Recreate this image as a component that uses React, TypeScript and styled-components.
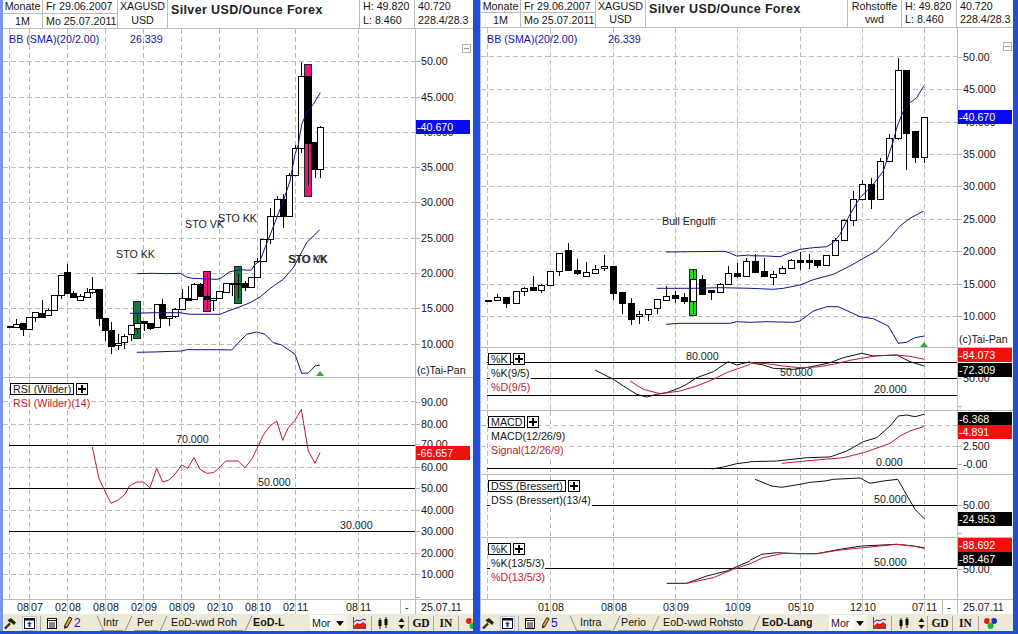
import React from "react";
import styled, { createGlobalStyle } from "styled-components";

const FONT = `"Liberation Sans", Arial, sans-serif`;

const Global = createGlobalStyle`
  html, body { margin: 0; padding: 0; background: #1f50d2; overflow: hidden; }
  #root { width: 1018px; height: 634px; }
`;

const Desktop = styled.div`
  display: flex;
  width: 1018px;
  height: 634px;
  background: #1f50d2;
  overflow: hidden;
  font-family: ${FONT};
  font-size: 10.7px;
  color: #161616;
`;
const ChartWindow = styled.div<{ $w: number; $edge: string; $edgeW: number; $ml: number }>`
  display: flex;
  flex-direction: column;
  width: ${(p) => p.$w}px;
  height: 631px;
  margin-left: ${(p) => p.$ml}px;
  flex: none;
  background: #fff;
  border-left: ${(p) => p.$edgeW}px solid ${(p) => p.$edge};
  box-sizing: border-box;
  overflow: hidden;
`;

/* header */
const Header = styled.div<{ $cols: string; $h: number }>`
  display: grid;
  grid-template-columns: ${(p) => p.$cols};
  height: ${(p) => p.$h}px;
  flex: none;
  border-bottom: 1px solid #bdbdbd;
  background: #fff;
`;
const HeadCell = styled.div`
  display: flex;
  flex-direction: column;
  border-right: 1px solid #bdbdbd;
  overflow: hidden;
  white-space: nowrap;
  &:last-child { border-right: 0; }
`;
const HeadLine = styled.div<{ $row: number; $ruled?: boolean; $center?: boolean }>`
  height: ${(p) => p.$row}px;
  line-height: ${(p) => p.$row}px;
  flex: none;
  padding-left: ${(p) => (p.$center ? 0 : 3)}px;
  text-align: ${(p) => (p.$center ? "center" : "left")};
  border-bottom: ${(p) => (p.$ruled ? "1px solid #bdbdbd" : "0")};
`;
const Title = styled.div<{ $lh: number }>`
  font-weight: 700;
  font-size: 12.5px;
  letter-spacing: 0.36px;
  padding-left: 3px;
  line-height: ${(p) => p.$lh}px;
  color: #222;
`;

/* panels */
const PanelRow = styled.div<{ $h: number }>`
  display: flex;
  height: ${(p) => p.$h}px;
  flex: none;
  border-bottom: 1px solid #bdbdbd;
  box-sizing: border-box;
`;
const PlotArea = styled.div<{ $w: number }>`
  position: relative;
  width: ${(p) => p.$w}px;
  flex: none;
`;
const PlotSvg = styled.svg`
  display: block;
  width: 100%;
  height: 100%;
`;
const AxisColumn = styled.div`
  position: relative;
  flex: 1;
  border-left: 1px solid #bdbdbd;
  overflow: hidden;
`;
const Tick = styled.div.attrs<{ $top: number }>((p) => ({ style: { top: `${p.$top}px` } }))<{ $top: number }>`
  position: absolute;
  left: 0;
  height: 14px;
  line-height: 14px;
  margin-top: -7px;
  padding-left: 5px;
  white-space: nowrap;
  &::before {
    content: "";
    position: absolute;
    left: 0;
    top: 7px;
    width: 4px;
    height: 1px;
    background: #b0b0b0;
  }
`;
const Badge = styled.div.attrs<{ $top: number }>((p) => ({ style: { top: `${p.$top}px` } }))<{ $top: number; $bg: string }>`
  position: absolute;
  left: 0;
  width: 54px;
  height: 14px;
  line-height: 14px;
  padding-left: 1px;
  box-sizing: border-box;
  color: #fff;
  background: ${(p) => p.$bg};
  white-space: nowrap;
`;
const Copyright = styled.div.attrs<{ $top: number; $left: number }>((p) => ({ style: { top: `${p.$top}px`, left: `${p.$left}px` } }))<{ $top: number; $left: number }>`
  position: absolute;
  line-height: 14px;
  white-space: nowrap;
  background: #fff;
`;
const MinBox = styled.div.attrs<{ $top: number; $left: number }>((p) => ({ style: { top: `${p.$top}px`, left: `${p.$left}px` } }))<{ $top: number; $left: number }>`
  position: absolute;
  width: 7px;
  height: 7px;
  border: 1px solid #b4b4b4;
  &::after {
    content: "";
    position: absolute;
    left: 1px;
    right: 1px;
    top: 3px;
    height: 1px;
    background: #9a9a9a;
  }
`;
const MainLegend = styled.div.attrs<{ $left: number; $top: number }>((p) => ({ style: { top: `${p.$top}px`, left: `${p.$left}px` } }))<{ $left: number; $top: number; $gap: number }>`
  position: absolute;
  display: grid;
  grid-template-columns: ${(p) => p.$gap}px auto;
  line-height: 14px;
  color: #1414a0;
  white-space: nowrap;
`;
const Legend = styled.div.attrs<{ $left: number }>((p) => ({ style: { left: `${p.$left}px` } }))<{ $left: number }>`
  position: absolute;
  top: 5px;
  display: flex;
  flex-direction: column;
  align-items: flex-start;
`;
const LegendHead = styled.div`
  display: flex;
  gap: 2px;
  height: 12px;
  margin-bottom: 1px;
`;
const LegendBox = styled.div`
  height: 12px;
  line-height: 11px;
  padding: 0 2px;
  border: 1px solid #000;
  box-sizing: border-box;
  background: #fff;
  white-space: nowrap;
`;
const PlusBox = styled.div`
  position: relative;
  width: 12px;
  height: 12px;
  border: 1px solid #000;
  box-sizing: border-box;
  background: #fff;
  &::before { content: ""; position: absolute; left: 1px; right: 1px; top: 4px; height: 2px; background: #000; }
  &::after { content: ""; position: absolute; top: 1px; bottom: 1px; left: 4px; width: 2px; background: #000; }
`;
const LegendLine = styled.div<{ $red?: boolean }>`
  height: 14px;
  line-height: 14px;
  margin-left: 2px;
  padding: 0 1px;
  background: #fff;
  color: ${(p) => (p.$red ? "#c4182a" : "#161616")};
  white-space: nowrap;
`;
const ChartText = styled.text`
  font-family: ${FONT};
  font-size: 10.7px;
  fill: #1c1c1c;
`;

/* time axis */
const TimeAxis = styled.div`
  display: flex;
  height: 14px;
  flex: none;
  line-height: 14px;
  background: #fff;
`;
const TimeTrack = styled.div<{ $w: number }>`
  position: relative;
  width: ${(p) => p.$w}px;
  flex: none;
`;
const TimeTick = styled.div.attrs<{ $left: number }>((p) => ({ style: { left: `${p.$left}px` } }))<{ $left: number }>`
  position: absolute;
  top: 0;
  bottom: 0;
  border-left: 1px solid #d0d0d0;
`;
const TickBefore = styled.span`
  position: absolute;
  right: 100%;
  padding-right: 1px;
`;
const TickAfter = styled.span`
  position: absolute;
  left: 0;
  padding-left: 1px;
`;
const EndDash = styled(TimeTick)`
  padding-left: 4px;
  border-left-color: #bdbdbd;
`;
const DateCell = styled.div`
  flex: 1;
  padding-left: 5px;
  border-left: 1px solid #bdbdbd;
  white-space: nowrap;
`;

/* toolbar */
const Toolbar = styled.div`
  display: flex;
  align-items: center;
  height: 18px;
  flex: none;
  background: #ece9d8;
  overflow: hidden;
  font-size: 10.7px;
`;
const Slot = styled.div<{ $w: number; $start?: boolean; $inset?: number }>`
  display: flex;
  align-items: center;
  justify-content: ${(p) => (p.$start ? "flex-start" : "center")};
  width: ${(p) => p.$w}px;
  height: 18px;
  flex: none;
  box-sizing: border-box;
  padding-left: ${(p) => p.$inset ?? 0}px;
`;
const Sep = styled.div`
  width: 1px;
  height: 15px;
  flex: none;
  background: #aca899;
`;
const Pressed = styled.div`
  display: flex;
  align-items: center;
  justify-content: center;
  width: 15px;
  height: 15px;
  background: #fbfaf5;
  border: 1px solid #b9c5dc;
  box-sizing: border-box;
`;
const Digit = styled.span`
  color: #1a1ab4;
  font-size: 12px;
  padding-left: 1px;
`;
const TabStrip = styled.div`
  display: flex;
  height: 18px;
  flex: none;
`;
const Tab = styled.div<{ $w: number; $pad: number; $active?: boolean }>`
  position: relative;
  width: ${(p) => p.$w}px;
  flex: none;
  box-sizing: border-box;
  padding-left: ${(p) => p.$pad}px;
  line-height: 16px;
  font-weight: ${(p) => (p.$active ? 700 : 400)};
  white-space: nowrap;
  &::before {
    content: "";
    position: absolute;
    left: 3px;
    bottom: 0;
    width: 1px;
    height: 17px;
    background: #9a9788;
    transform: rotate(24deg);
  }
  &:first-child::before {
    left: 2px;
    transform: rotate(-24deg);
  }
  &::after {
    content: "";
    position: absolute;
    left: ${(p) => p.$pad - 3}px;
    right: 2px;
    bottom: 1px;
    height: 1px;
    background: ${(p) => (p.$active ? "#f8f7f1" : "#9a9788")};
  }
`;
const TabText = styled.span<{ $clip: number }>`
  display: block;
  width: ${(p) => p.$clip}px;
  overflow: hidden;
`;
const SelectBox = styled.div<{ $w: number }>`
  width: ${(p) => p.$w}px;
  height: 16px;
  line-height: 16px;
  flex: none;
  margin-left: 3px;
  padding-left: 2px;
  box-sizing: border-box;
  background: #fff;
`;
const SelectArrow = styled.div`
  display: flex;
  align-items: center;
  justify-content: center;
  width: 14px;
  height: 16px;
  flex: none;
  background: #f6f4ea;
`;
const Glyph = styled.span`
  font-family: "Liberation Serif", serif;
  font-weight: 700;
  font-size: 11.5px;
  color: #111;
`;
const TriDown = styled.div`
  width: 0;
  height: 0;
  border-left: 4px solid transparent;
  border-right: 4px solid transparent;
  border-top: 5px solid #111;
`;

/* ---- drawings ---- */
type Candle = [number, number, number, number, number, number];
type Marker = [number, number, number, string];

const Hammer = () => (
  <svg width="13" height="13" viewBox="0 0 13 13">
    <path d="M1 11.5 L6 6.5" stroke="#3a3020" strokeWidth="2.4" />
    <path d="M3.5 3 L7 1 L12 5.5 L10 8 L7 5.5 L5.5 5.5 Z" fill="#2c2418" />
  </svg>
);
const PanelIcon = () => (
  <svg width="11" height="11" viewBox="0 0 11 11">
    <rect x="0.5" y="0.5" width="10" height="10" fill="#fff" stroke="#111" />
    <rect x="0.5" y="0.5" width="10" height="2" fill="#111" />
    <path d="M5.5 3.5 L8 6 H6.5 V9 H4.5 V6 H3 Z" fill="#1c3aa8" />
  </svg>
);
const ListIcon = () => (
  <svg width="10" height="11" viewBox="0 0 10 11">
    <rect x="0.5" y="0.5" width="9" height="10" fill="#fff" stroke="#111" />
    <path d="M0 2.5 H10 M2 5 H8 M2 7 H8 M2 9 H8" stroke="#111" />
  </svg>
);
const Pencil = () => (
  <svg width="10" height="14" viewBox="0 0 10 14">
    <path d="M6.5 1 L9 2.5 L4 11.5 L1.5 10 Z" fill="#e8b81c" stroke="#111" strokeWidth="1" />
    <path d="M1.5 10 L1 13 L4 11.5 Z" fill="#111" />
  </svg>
);
const ChartIcon = () => (
  <svg width="13" height="12" viewBox="0 0 13 12">
    <path d="M0.5 0 V11.5 H13" stroke="#555" fill="none" />
    <path d="M1 9 L4 6 L7 7 L10 5 L13 7 V11 H1 Z" fill="#e02020" />
    <path d="M1 5 L4 3 L7 4 L10 2 L13 3" stroke="#2a2ab0" fill="none" />
    <path d="M1 7 L4 5 L7 6 L10 4 L13 5" stroke="#eee" fill="none" />
  </svg>
);
const CandleIcon = () => (
  <svg width="10" height="13" viewBox="0 0 10 13">
    <path d="M2 1 V12 M8 0 V11" stroke="#111" />
    <rect x="0.5" y="3" width="3" height="6" fill="#111" />
    <rect x="6.5" y="2" width="3" height="6" fill="#111" />
  </svg>
);
const UpDown = () => (
  <svg width="7" height="13" viewBox="0 0 7 13">
    <path d="M3.5 1 L6.5 5 H0.5 Z M3.5 12 L0.5 8 H6.5 Z" fill="#111" />
  </svg>
);
const Dots = () => (
  <svg width="15" height="14" viewBox="0 0 15 14">
    <circle cx="4" cy="5" r="3" fill="#e02020" />
    <circle cx="11" cy="5" r="3" fill="#1c2ec8" />
    <circle cx="7.5" cy="10" r="3" fill="#18b838" />
    <circle cx="7.5" cy="5" r="1.5" fill="#e8d020" />
  </svg>
);

const pts = (a: number[], ox: number, oy: number) => {
  const out: string[] = [];
  for (let i = 0; i < a.length; i += 2) out.push(`${(ox + a[i] / 3).toFixed(1)},${(oy + a[i + 1] / 3).toFixed(1)}`);
  return out.join(" ");
};
const Trace = ({ d, c }: { d: string; c: string }) => <polyline points={d} fill="none" stroke={c} strokeWidth={1} />;

const GridLines = ({ x0, x1, y0, y1, hs, vs }: { x0: number; x1: number; y0: number; y1: number; hs: number[]; vs: number[] }) => (
  <g stroke="#bcbcbc" strokeDasharray="5 3" shapeRendering="crispEdges">
    {hs.map((y) => (
      <line key={`h${y}`} x1={x0} x2={x1} y1={Math.floor(y) + 0.5} y2={Math.floor(y) + 0.5} />
    ))}
    {vs.map((x) => (
      <line key={`v${x}`} x1={x + 0.5} x2={x + 0.5} y1={y0} y2={y1} />
    ))}
  </g>
);
const SolidLines = ({ x0, x1, ys }: { x0: number; x1: number; ys: number[] }) => (
  <g stroke="#000" shapeRendering="crispEdges">
    {ys.map((y) => (
      <line key={y} x1={x0} x2={x1} y1={y + 0.5} y2={y + 0.5} />
    ))}
  </g>
);
const Candles = ({ data, ox, oy }: { data: Candle[]; ox: number; oy: number }) => (
  <g shapeRendering="crispEdges" stroke="#000">
    {data.map(([x, wt, wb, bt, bb, dark]) => {
      const X = Math.round(ox + x / 3);
      const t = Math.round(oy + bt / 3);
      const b = Math.round(oy + bb / 3);
      return (
        <g key={x}>
          <line x1={X + 0.5} x2={X + 0.5} y1={Math.round(oy + wt / 3)} y2={Math.round(oy + wb / 3)} />
          <rect x={X - 2.5} y={t + 0.5} width={6} height={Math.max(1, b - t)} fill={dark ? "#000" : "#fff"} />
        </g>
      );
    })}
  </g>
);
const Markers = ({ data, ox, oy }: { data: Marker[]; ox: number; oy: number }) => (
  <g shapeRendering="crispEdges" stroke="#222">
    {data.map(([x, t, b, c]) => (
      <rect key={x} x={Math.round(ox + x / 3) - 3.5} y={Math.round(oy + t / 3) + 0.5} width={7} height={Math.round((b - t) / 3)} fill={c} />
    ))}
  </g>
);

type TickT = { y: number; t?: string };
type BadgeT = { y: number; t: string; c: string };
type PanelProps = {
  x: number; y: number; w: number; h: number;
  hs: number[]; vs: number[]; solid?: number[]; solidFrom: number;
  ticks: TickT[]; badges?: BadgeT[];
  children?: React.ReactNode; overlay?: React.ReactNode; axisExtra?: React.ReactNode;
};
const Panel = ({ x, y, w, h, hs, vs, solid = [], solidFrom, ticks, badges = [], children, overlay, axisExtra }: PanelProps) => (
  <PanelRow $h={h + 1}>
    <PlotArea $w={w}>
      <PlotSvg viewBox={`${x} ${y} ${w} ${h}`}>
        <GridLines x0={x} x1={x + w} y0={y} y1={y + h} hs={hs} vs={vs} />
        <SolidLines x0={solidFrom} x1={x + w} ys={solid} />
        {children}
      </PlotSvg>
      {overlay}
    </PlotArea>
    <AxisColumn>
      {ticks.map((k) => (
        <Tick key={k.y} $top={k.y - y}>{k.t}</Tick>
      ))}
      {badges.map((b) => (
        <Badge key={b.t} $top={b.y - y} $bg={b.c}>{b.t}</Badge>
      ))}
      {axisExtra}
    </AxisColumn>
  </PanelRow>
);

const IndicatorLegend = ({ left, box, lines }: { left: number; box: string; lines: [string, boolean][] }) => (
  <Legend $left={left}>
    <LegendHead>
      <LegendBox>{box}</LegendBox>
      <PlusBox />
    </LegendHead>
    {lines.map(([t, red]) => (
      <LegendLine key={t} $red={red}>{t}</LegendLine>
    ))}
  </Legend>
);

const BLUE = "#12128c";
const RED = "#c4182a";
const BLK = "#111";

/* ---- left window ---- */
const LV = [9, 29, 67, 105, 143, 181, 219, 257, 295, 358];
const GREEN_D = "#127a3e";
const PINK = "#e8147c";
const L1: Candle[] = [
  [30, 857, 857, 856, 858, 1], [48, 835, 858, 848, 857, 0], [70, 846, 885, 846, 865, 1], [88, 828, 865, 828, 865, 0],
  [106, 812, 842, 814, 828, 0], [125, 778, 828, 815, 827, 1], [145, 802, 825, 808, 823, 0], [163, 763, 808, 763, 808, 0],
  [183, 702, 775, 703, 763, 0], [202, 668, 760, 693, 757, 1], [220, 750, 770, 757, 767, 1], [240, 760, 780, 765, 778, 0],
  [260, 740, 770, 752, 767, 0], [277, 708, 760, 745, 752, 0], [297, 745, 855, 745, 832, 1], [316, 830, 900, 832, 868, 1],
  [334, 842, 938, 868, 916, 1], [354, 880, 928, 905, 912, 0], [373, 880, 925, 886, 902, 0], [392, 855, 900, 853, 880, 0],
  [412, 815, 880, 845, 860, 0], [431, 840, 870, 840, 847, 1], [450, 845, 868, 847, 860, 1], [470, 790, 858, 790, 858, 0],
  [487, 775, 830, 790, 832, 1], [506, 825, 855, 825, 832, 0], [526, 800, 830, 805, 825, 0], [545, 745, 808, 770, 805, 0],
  [563, 735, 780, 770, 777, 1], [583, 725, 775, 730, 775, 0], [601, 725, 765, 730, 765, 1], [620, 700, 805, 765, 775, 1],
  [640, 770, 810, 772, 778, 0], [658, 750, 775, 750, 770, 0], [677, 725, 752, 725, 752, 0], [697, 725, 765, 725, 728, 1],
  [713, 700, 770, 725, 728, 1],
];
const L2: Candle[] = [
  [15, 720, 750, 725, 738, 1], [34, 708, 742, 708, 738, 0], [52, 650, 710, 660, 708, 0], [70, 595, 660, 595, 660, 0],
  [90, 500, 610, 525, 595, 0], [110, 465, 525, 475, 525, 0], [128, 460, 560, 475, 525, 1], [148, 395, 525, 403, 525, 0],
  [166, 312, 403, 322, 403, 0], [184, 62, 335, 106, 322, 0], [204, 106, 435, 106, 307, 1], [224, 303, 412, 303, 385, 1],
  [241, 255, 410, 259, 385, 0],
];

const LeftWindow = () => (
  <ChartWindow $w={473} $edge="#7a96df" $edgeW={3} $ml={0}>
    <Header $h={28} $cols="40px 75px 50px 192px 55px 1fr">
      <HeadCell>
        <HeadLine $row={13} $ruled $center>Monate</HeadLine>
        <HeadLine $row={14} $center>1M</HeadLine>
      </HeadCell>
      <HeadCell>
        <HeadLine $row={13} $ruled>Fr 29.06.2007</HeadLine>
        <HeadLine $row={14}>Mo 25.07.2011</HeadLine>
      </HeadCell>
      <HeadCell>
        <HeadLine $row={13} $center>XAGUSD</HeadLine>
        <HeadLine $row={14} $center>USD</HeadLine>
      </HeadCell>
      <HeadCell><Title $lh={21}>Silver USD/Ounce Forex</Title></HeadCell>
      <HeadCell>
        <HeadLine $row={13}>H: 49.820</HeadLine>
        <HeadLine $row={14}>L: 8.460</HeadLine>
      </HeadCell>
      <HeadCell>
        <HeadLine $row={13}>40.720</HeadLine>
        <HeadLine $row={14}>228.4/28.3</HeadLine>
      </HeadCell>
    </Header>
    <Panel
      x={3} y={28} w={412} h={348} solidFrom={9} vs={LV}
      hs={[60, 96, 131, 166, 201, 237, 272, 307, 343]}
      ticks={[
        { y: 60, t: "50.00" }, { y: 96, t: "45.000" }, { y: 131, t: "40.000" }, { y: 166, t: "35.000" }, { y: 201, t: "30.000" },
        { y: 237, t: "25.000" }, { y: 272, t: "20.000" }, { y: 307, t: "15.000" }, { y: 343, t: "10.000" },
      ]}
      badges={[{ y: 119, t: "-40.670", c: "#0a0af0" }]}
      overlay={<MainLegend $left={6} $top={3} $gap={121}><span>BB (SMA)(20/2.00)</span><span>26.339</span></MainLegend>}
      axisExtra={<>
        <MinBox $top={15} $left={46} />
        <Copyright $top={334} $left={1}>(c)Tai-Pan</Copyright>
      </>}
    >
      <Markers data={[[412, 780, 892, GREEN_D], [620, 690, 810, PINK], [713, 676, 788, GREEN_D]]} ox={0} oy={40} />
      <Markers data={[[204, 70, 465, PINK]]} ox={240} oy={40} />
      <Candles data={L1} ox={0} oy={40} />
      <Candles data={L2} ox={240} oy={40} />
      <Trace c={BLUE} d={pts([410,698,460,697,500,698,540,697,560,708,575,712,650,715,660,713,690,692,720,686,750,688,755,686,765,670,780,660,795,620,815,570,830,530,850,480,870,420,885,340,895,310,905,250,920,215,940,190,961,155], 0, 40)} />
      <Trace c={BLUE} d={pts([390,817,470,815,540,815,570,820,660,820,690,808,720,797,750,785,780,768,820,735,850,715,880,680,920,605,959,566], 0, 40)} />
      <Trace c={BLUE} d={pts([410,934,460,933,545,930,560,926,660,926,695,927,720,900,740,880,770,873,795,880,820,905,845,912,885,940,905,997,925,996,945,975,960,972], 0, 40)} />
      <polygon points="316,375 320,370 324,375" fill="#2fae3a" />
      <ChartText x={116} y={257}>STO KK</ChartText>
      <ChartText x={185} y={227}>STO VK</ChartText>
      <ChartText x={218} y={221}>STO KK</ChartText>
      <ChartText x={288} y={262}>STO KK</ChartText>
      <ChartText x={289} y={262}>STO VK</ChartText>
    </Panel>
    <Panel
      x={3} y={377} w={412} h={221} solidFrom={9} vs={LV} solid={[444, 487, 530]}
      hs={[400, 423, 466, 509, 552, 573]}
      ticks={[
        { y: 401, t: "90.00" }, { y: 423, t: "80.00" }, { y: 443, t: "70.00" }, { y: 466, t: "60.00" }, { y: 487, t: "50.00" },
        { y: 509, t: "40.000" }, { y: 530, t: "30.000" }, { y: 552, t: "20.000" }, { y: 573, t: "10.000" }, { y: 596 },
      ]}
      badges={[{ y: 445, t: "-66.657", c: "#f01010" }]}
      overlay={<IndicatorLegend left={7} box="RSI (Wilder)" lines={[["RSI (Wilder)(14)", true]]} />}
    >
      <Trace c={RED} d={pts([277,228,297,323,310,350,333,397,355,387,375,370,388,345,410,333,430,333,450,350,470,292,488,333,505,328,525,310,545,282,563,292,582,260,600,295,620,307,640,305,658,290,677,270,715,270,735,290,755,265,770,235,790,192,810,165,830,150,848,208,865,170,885,148,904,115,925,240,945,277,960,245], 0, 370)} />
      <ChartText x={176} y={442}>70.000</ChartText>
      <ChartText x={258} y={485}>50.000</ChartText>
      <ChartText x={340} y={528}>30.000</ChartText>
    </Panel>
    <TimeAxis>
      <TimeTrack $w={412}>
        {[[26,"08","07"],[64,"02","08"],[102,"08","08"],[140,"02","09"],[178,"08","09"],[216,"02","10"],[254,"08","10"],[292,"02","11"],[355,"08","11"]].map(([l, a, b]) => (
          <TimeTick key={l as number} $left={l as number}>
            <TickBefore>{a}</TickBefore>
            <TickAfter>{b}</TickAfter>
          </TimeTick>
        ))}
        <EndDash $left={397}>-</EndDash>
      </TimeTrack>
      <DateCell>25.07.11</DateCell>
    </TimeAxis>
    <Toolbar>
      <Slot $w={15}><Hammer /></Slot>
      <Slot $w={22}><Pressed><PanelIcon /></Pressed></Slot>
      <Sep />
      <Slot $w={22}><ListIcon /></Slot>
      <Slot $w={10}><Pencil /></Slot>
      <Slot $w={25} $start><Digit>2</Digit></Slot>
      <TabStrip>
        <Tab $w={27} $pad={5}><TabText $clip={16}>Intr</TabText></Tab>
        <Tab $w={35} $pad={12}><TabText $clip={18}>Per</TabText></Tab>
        <Tab $w={85} $pad={11}>EoD-vwd Roh</Tab>
        <Tab $w={62} $pad={8} $active><TabText $clip={34}>EoD-L</TabText></Tab>
      </TabStrip>
      <SelectBox $w={23}>Mor</SelectBox>
      <SelectArrow><TriDown /></SelectArrow>
      <Slot $w={24}><ChartIcon /></Slot>
      <Sep />
      <Slot $w={22}><CandleIcon /></Slot>
      <Slot $w={14}><UpDown /></Slot>
      <Sep />
      <Slot $w={24}><Glyph>GD</Glyph></Slot>
      <Sep />
      <Slot $w={24}><Glyph>IN</Glyph></Slot>
      <Sep />
      <Slot $w={21} $start $inset={6}><Dots /></Slot>
    </Toolbar>
  </ChartWindow>
);

/* ---- right window ---- */
const RV = [487, 550, 613, 675, 737, 800, 862, 924];
const R1: Candle[] = [
  [25, 298, 298, 297, 299, 1], [52, 278, 298, 289, 298, 0], [79, 288, 322, 289, 307, 1], [107, 271, 307, 271, 307, 0],
  [133, 259, 285, 260, 271, 0], [160, 225, 270, 259, 268, 1], [184, 250, 275, 253, 268, 0], [211, 211, 253, 211, 253, 0],
  [238, 155, 224, 157, 211, 0], [265, 127, 207, 148, 207, 1], [292, 175, 221, 208, 216, 1], [319, 183, 227, 214, 226, 0],
  [346, 193, 220, 203, 215, 0], [373, 163, 210, 196, 202, 0], [400, 196, 297, 196, 277, 1], [427, 273, 338, 273, 307, 1],
  [452, 290, 373, 307, 353, 1], [478, 330, 368, 340, 346, 0], [505, 325, 360, 325, 340, 0], [532, 295, 340, 295, 320, 0],
  [559, 255, 300, 286, 297, 0], [586, 270, 305, 283, 290, 1], [613, 275, 308, 288, 299, 1], [640, 203, 340, 235, 301, 0],
  [667, 222, 278, 235, 278, 1], [694, 268, 296, 268, 273, 1], [721, 245, 272, 250, 272, 0], [745, 195, 250, 217, 250, 0],
  [771, 185, 230, 216, 224, 1], [799, 172, 224, 180, 224, 0],
];
const R2: Candle[] = [
  [16, 640, 692, 660, 692, 1], [43, 650, 705, 690, 705, 1], [70, 690, 733, 700, 707, 0], [97, 675, 700, 680, 697, 0],
  [124, 655, 680, 658, 680, 0], [151, 632, 686, 658, 662, 1], [178, 640, 683, 658, 662, 1], [202, 658, 680, 658, 672, 1],
  [229, 643, 675, 643, 672, 0], [256, 590, 643, 598, 643, 0], [283, 535, 598, 538, 598, 0], [310, 450, 555, 475, 538, 0],
  [337, 418, 475, 430, 475, 0], [364, 412, 505, 430, 475, 1], [391, 352, 475, 361, 475, 0], [418, 278, 361, 290, 361, 0],
  [445, 50, 298, 88, 290, 0], [469, 88, 388, 88, 275, 1], [496, 270, 367, 270, 347, 1], [523, 229, 367, 229, 347, 0],
];

const RightWindow = () => (
  <ChartWindow $w={533} $edge="#b6bdd4" $edgeW={1} $ml={7}>
    <Header $h={27} $cols="40px 75px 50px 202px 54px 55px 1fr">
      <HeadCell>
        <HeadLine $row={12} $ruled $center>Monate</HeadLine>
        <HeadLine $row={14} $center>1M</HeadLine>
      </HeadCell>
      <HeadCell>
        <HeadLine $row={12} $ruled>Fr 29.06.2007</HeadLine>
        <HeadLine $row={14}>Mo 25.07.2011</HeadLine>
      </HeadCell>
      <HeadCell>
        <HeadLine $row={12} $center>XAGUSD</HeadLine>
        <HeadLine $row={14} $center>USD</HeadLine>
      </HeadCell>
      <HeadCell><Title $lh={18}>Silver USD/Ounce Forex</Title></HeadCell>
      <HeadCell>
        <HeadLine $row={12} $center>Rohstoffe</HeadLine>
        <HeadLine $row={14} $center>vwd</HeadLine>
      </HeadCell>
      <HeadCell>
        <HeadLine $row={12}>H: 49.820</HeadLine>
        <HeadLine $row={14}>L: 8.460</HeadLine>
      </HeadCell>
      <HeadCell>
        <HeadLine $row={12}>40.720</HeadLine>
        <HeadLine $row={14}>228.4/28.3</HeadLine>
      </HeadCell>
    </Header>
    <Panel
      x={481} y={27} w={476} h={319} solidFrom={487} vs={RV}
      hs={[55, 88, 121, 153, 185, 218, 250, 283, 315]}
      ticks={[
        { y: 56, t: "50.00" }, { y: 88, t: "45.000" }, { y: 121, t: "40.000" }, { y: 153, t: "35.000" }, { y: 185, t: "30.000" },
        { y: 218, t: "25.000" }, { y: 250, t: "20.000" }, { y: 283, t: "15.000" }, { y: 315, t: "10.000" },
      ]}
      badges={[{ y: 109, t: "-40.670", c: "#0a0af0" }]}
      overlay={<MainLegend $left={6} $top={4} $gap={121}><span>BB (SMA)(20/2.00)</span><span>26.339</span></MainLegend>}
      axisExtra={<>
        <MinBox $top={14} $left={45} />
        <Copyright $top={304} $left={1}>(c)Tai-Pan</Copyright>
      </>}
    >
      <Markers data={[[640, 203, 340, "#20dc20"]]} ox={480} oy={200} />
      <Candles data={R1} ox={480} oy={200} />
      <Candles data={R2} ox={750} oy={40} />
      <Trace c={BLUE} d={pts([558,153,735,151,750,156,770,165,810,162], 480, 200)} />
      <Trace c={BLUE} d={pts([0,644,50,645,90,647,120,635,150,625,190,620,230,617,250,605,270,580,300,520,330,470,370,430,400,390,430,300,440,260,460,210,480,185,500,170,521,135], 750, 40)} />
      <Trace c={BLUE} d={pts([530,262,640,262,720,260,810,262], 480, 200)} />
      <Trace c={BLUE} d={pts([0,742,70,745,100,742,150,732,190,716,250,700,300,675,340,652,380,630,420,590,450,555,480,532,521,510], 750, 40)} />
      <Trace c={BLUE} d={pts([558,370,600,367,750,367,770,362,810,364], 480, 200)} />
      <Trace c={BLUE} d={pts([0,844,50,842,130,844,150,840,190,810,230,797,265,797,330,827,370,833,415,855,445,907,470,904,495,890,523,885], 750, 40)} />
      <polygon points="920,346 924,341 928,346" fill="#2fae3a" />
      <ChartText x={662} y={224}>Bull Engulfi</ChartText>
    </Panel>
    <Panel
      x={481} y={347} w={476} h={62} solidFrom={487} vs={RV} solid={[361, 377, 394]} hs={[]}
      ticks={[{ y: 377, t: "50.00" }, { y: 405 }]}
      badges={[{ y: 347, t: "-84.073", c: "#f01010" }, { y: 362, t: "-72.309", c: "#000" }]}
      overlay={<IndicatorLegend left={7} box="%K" lines={[["%K(9/5)", false], ["%D(9/5)", true]]} />}
    >
      <Trace c={BLK} d={pts([345,87,400,115,430,135,470,160,500,168,530,160,560,155,600,140,620,130,650,110,700,92,745,62,770,72,810,62], 480, 340)} />
      <Trace c={BLK} d={pts([0,65,40,72,70,82,130,85,180,78,240,65,280,50,335,37,370,45,440,42,480,62,523,75], 750, 340)} />
      <Trace c={RED} d={pts([450,120,490,145,540,158,600,150,650,135,700,115,740,95,810,70], 480, 340)} />
      <Trace c={RED} d={pts([0,65,50,68,100,75,150,80,200,78,250,70,300,58,380,44,440,42,480,46,523,55], 750, 340)} />
      <ChartText x={686} y={359}>80.000</ChartText>
      <ChartText x={780} y={375}>50.000</ChartText>
      <ChartText x={874} y={392}>20.000</ChartText>
    </Panel>
    <Panel
      x={481} y={410} w={476} h={63} solidFrom={487} vs={RV} solid={[467]} hs={[424, 445]}
      ticks={[{ y: 424, t: "5.000" }, { y: 445, t: "2.500" }, { y: 463, t: "-0.00" }]}
      badges={[{ y: 411, t: "-6.368", c: "#000" }, { y: 424, t: "-4.891", c: "#f01010" }]}
      overlay={<IndicatorLegend left={7} box="MACD" lines={[["MACD(12/26/9)", false], ["Signal(12/26/9)", true]]} />}
    >
      <Trace c={BLK} d={pts([695,384,730,378,770,368,810,363], 480, 340)} />
      <Trace c={BLK} d={pts([0,362,80,360,170,350,240,348,290,330,340,302,380,290,420,255,445,225,470,222,495,227,523,220], 750, 340)} />
      <Trace c={RED} d={pts([95,367,190,358,280,350,340,335,370,325,420,307,450,285,480,270,523,256], 750, 340)} />
      <ChartText x={876} y={465}>0.000</ChartText>
    </Panel>
    <Panel
      x={481} y={474} w={476} h={62} solidFrom={487} vs={RV} solid={[504]} hs={[]}
      ticks={[{ y: 504, t: "50.00" }, { y: 532 }]}
      badges={[{ y: 511, t: "-24.953", c: "#000" }]}
      overlay={<IndicatorLegend left={7} box="DSS (Bressert)" lines={[["DSS (Bressert)(13/4)", false]]} />}
    >
      <Trace c={BLK} d={pts([15,415,65,435,95,439,150,430,180,424,225,420,250,415,330,411,360,427,400,420,443,415,495,505,523,533], 750, 340)} />
      <ChartText x={874} y={502}>50.000</ChartText>
    </Panel>
    <Panel
      x={481} y={537} w={476} h={61} solidFrom={487} vs={RV} solid={[567]} hs={[]}
      ticks={[{ y: 568, t: "50.00" }]}
      badges={[{ y: 537, t: "-88.692", c: "#f01010" }, { y: 551, t: "-85.467", c: "#000" }]}
      overlay={<IndicatorLegend left={7} box="%K" lines={[["%K(13/5/3)", false], ["%D(13/5/3)", true]]} />}
    >
      <Trace c={BLK} d={pts([560,727,620,727,680,705,740,690,810,660], 480, 340)} />
      <Trace c={BLK} d={pts([0,658,35,640,80,635,140,638,200,638,270,625,335,615,440,610,490,615,523,622], 750, 340)} />
      <Trace c={RED} d={pts([620,727,700,710,760,685,810,668], 480, 340)} />
      <Trace c={RED} d={pts([0,668,40,650,100,637,200,638,270,627,340,620,440,610,490,615,523,620], 750, 340)} />
      <ChartText x={874} y={565}>50.000</ChartText>
    </Panel>
    <TimeAxis>
      <TimeTrack $w={476}>
        {[[69,"01","08"],[132,"08","08"],[194,"03","09"],[256,"10","09"],[319,"05","10"],[381,"12","10"],[443,"07","11"]].map(([l, a, b]) => (
          <TimeTick key={l as number} $left={l as number}>
            <TickBefore>{a}</TickBefore>
            <TickAfter>{b}</TickAfter>
          </TimeTick>
        ))}
        <EndDash $left={461}>-</EndDash>
      </TimeTrack>
      <DateCell>25.07.11</DateCell>
    </TimeAxis>
    <Toolbar>
      <Slot $w={15}><Hammer /></Slot>
      <Slot $w={22}><Pressed><PanelIcon /></Pressed></Slot>
      <Sep />
      <Slot $w={22}><ListIcon /></Slot>
      <Slot $w={9}><Pencil /></Slot>
      <Slot $w={21} $start><Digit>5</Digit></Slot>
      <TabStrip>
        <Tab $w={42} $pad={9}>Intra</Tab>
        <Tab $w={39} $pad={8}>Perio</Tab>
        <Tab $w={101} $pad={11}>EoD-vwd Rohsto</Tab>
        <Tab $w={73} $pad={9} $active><TabText $clip={50}>EoD-Lang</TabText></Tab>
      </TabStrip>
      <SelectBox $w={24}>Mor</SelectBox>
      <SelectArrow><TriDown /></SelectArrow>
      <Slot $w={24}><ChartIcon /></Slot>
      <Sep />
      <Slot $w={24}><CandleIcon /></Slot>
      <Slot $w={11}><UpDown /></Slot>
      <Sep />
      <Slot $w={24}><Glyph>GD</Glyph></Slot>
      <Sep />
      <Slot $w={25}><Glyph>IN</Glyph></Slot>
      <Sep />
      <Slot $w={22}><Dots /></Slot>
    </Toolbar>
  </ChartWindow>
);

export default function App() {
  return (
    <Desktop>
      <Global />
      <LeftWindow />
      <RightWindow />
    </Desktop>
  );
}
